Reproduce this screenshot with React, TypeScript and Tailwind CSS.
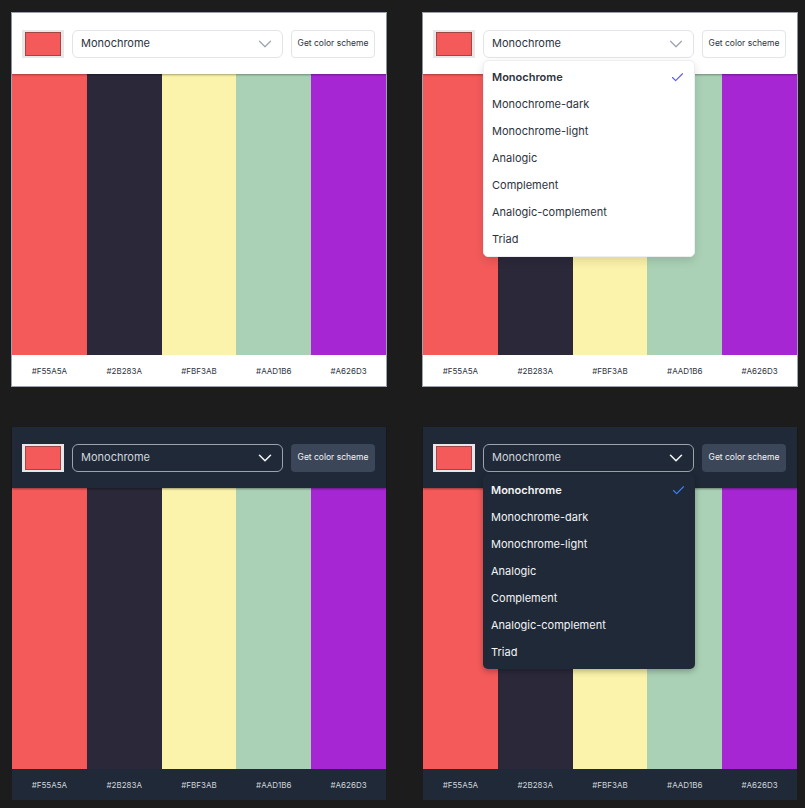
import { Check, ChevronDown } from "lucide-react";

const colors = ["#F55A5A", "#2B283A", "#FBF3AB", "#AAD1B6", "#A626D3"];
const modes = [
  "Monochrome",
  "Monochrome-dark",
  "Monochrome-light",
  "Analogic",
  "Complement",
  "Analogic-complement",
  "Triad",
];

function Panel({ dark, open }: { dark?: boolean; open?: boolean }) {
  return (
    <div
      className={`flex h-[373px] w-[374px] flex-col overflow-visible ${
        dark ? "bg-[#1f2937]" : "bg-white shadow-[0_0_0_1px_#9ca3af]"
      }`}
    >
      <header
        className={`relative z-10 flex h-[61px] shrink-0 items-center gap-[8px] px-[10px] ${
          dark ? "bg-[#1f2937] shadow-[0_1px_2px_rgba(0,0,0,0.4)]" : "bg-white shadow-[0_1px_2px_rgba(0,0,0,0.35)]"
        }`}
      >
        <div
          className={`flex h-[28px] w-[42px] shrink-0 items-center justify-center ${
            dark ? "bg-[#e5e7eb]" : "bg-[#e8e8e8]"
          }`}
        >
          <div className="h-[24px] w-[36px] border border-[#a14545] bg-[#F55A5A]" />
        </div>

        <div className="relative w-[211px] shrink-0">
          <div
            className={`flex h-[28px] items-center justify-between rounded-[6px] border pl-[8px] pr-[6px] text-[11px] ${
              dark
                ? "border-[#9ca3af] bg-[#1f2937] text-[#d1d5db]"
                : "border-[#e2e4e8] bg-white text-[#2d3340]"
            }`}
          >
            <span>Monochrome</span>
            <ChevronDown
              size={22}
              strokeWidth={dark ? 1.7 : 1.3}
              className={dark ? "text-[#f3f4f6]" : "text-[#9ca3af]"}
            />
          </div>

          {open && (
            <ul
              className={`absolute left-0 top-[30px] w-[212px] rounded-[5px] py-[3px] text-[11px] ${
                dark
                  ? "bg-[#1f2937] text-[#f3f4f6] shadow-[0_2px_6px_rgba(0,0,0,0.3)]"
                  : "border border-[#eceef1] bg-white text-[#2d3340] shadow-[0_4px_10px_rgba(0,0,0,0.12)]"
              }`}
            >
              {modes.map((m, i) => (
                <li
                  key={m}
                  className={`flex h-[27px] items-center justify-between pl-[8px] pr-[9px] ${
                    i === 0 ? "font-semibold" : ""
                  }`}
                >
                  <span>{m}</span>
                  {i === 0 && (
                    <Check
                      size={15}
                      strokeWidth={1.8}
                      className={dark ? "text-[#3b82f6]" : "text-[#5b5bf0]"}
                    />
                  )}
                </li>
              ))}
            </ul>
          )}
        </div>

        <button
          className={`h-[28px] w-[84px] shrink-0 rounded-[4px] text-[8.5px] ${
            dark
              ? "bg-[#3b4659] text-[#f3f4f6]"
              : "border border-[#e2e4e8] bg-white text-[#2d3340]"
          }`}
        >
          Get color scheme
        </button>
      </header>

      <div className="grid flex-1 grid-cols-5">
        {colors.map((c) => (
          <div key={c} style={{ backgroundColor: c }} />
        ))}
      </div>

      <footer
        className={`grid h-[31px] shrink-0 grid-cols-5 items-center text-center text-[8px] ${
          dark ? "bg-[#1f2937] text-[#d1d5db]" : "bg-white text-[#2d3340]"
        }`}
      >
        {colors.map((c) => (
          <span key={c}>{c}</span>
        ))}
      </footer>
    </div>
  );
}

export default function App() {
  return (
    <div
      className="min-h-screen bg-[#1c1c1c] pl-[12px] pt-[13px]"
      style={{ fontFamily: "Inter, 'Noto Sans', sans-serif" }}
    >
      <div className="grid w-max grid-cols-[374px_374px] gap-x-[37px] gap-y-[41px]">
        <Panel />
        <Panel open />
        <Panel dark />
        <Panel dark open />
      </div>
    </div>
  );
}
